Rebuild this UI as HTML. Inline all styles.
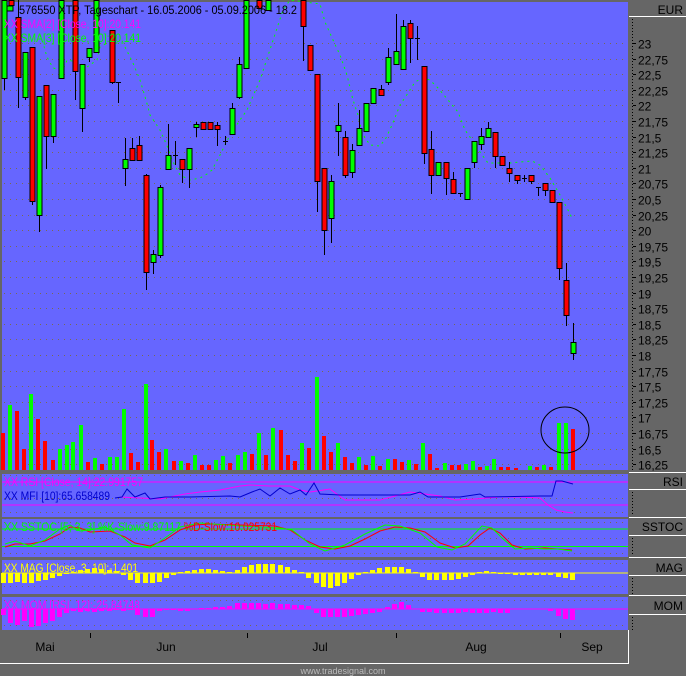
<!DOCTYPE html>
<html><head><meta charset="utf-8"><style>
html,body{margin:0;padding:0;background:#666666;width:686px;height:676px;overflow:hidden}
svg{display:block}
text{font-family:"Liberation Sans",Arial,sans-serif}
</style></head><body>
<svg id="s" width="686" height="676" viewBox="0 0 686 676" xmlns="http://www.w3.org/2000/svg">
<rect width="686" height="676" fill="#666666"/>
<rect x="2" y="2" width="626" height="468" fill="#6666ff"/>
<rect x="2" y="474" width="626" height="43" fill="#6666ff"/>
<rect x="2" y="519" width="626" height="38" fill="#6666ff"/>
<rect x="2" y="560" width="626" height="34" fill="#6666ff"/>
<rect x="2" y="597" width="626" height="33" fill="#6666ff"/>
<g id="grid"></g>
<g id="vol"></g>
<polyline id="sma" fill="none" stroke="#00ff00" stroke-width="1" stroke-dasharray="2,4"/>
<g id="candles"></g>
<ellipse cx="565" cy="430" rx="24" ry="23" fill="none" stroke="#000" stroke-width="1"/>
<rect x="7" y="6" width="6" height="5" fill="#00ff00" stroke="#000"/>
<text x="19" y="14" font-size="12" fill="#000" textLength="278" lengthAdjust="spacingAndGlyphs">576550 XTP, Tageschart - 16.05.2006 - 05.09.2006 - 18.2</text>
<text x="4" y="28" font-size="12" fill="#ff00ff" textLength="137" lengthAdjust="spacingAndGlyphs">XX SMA[2] [Close, 10]:20.141</text>
<text x="4" y="42" font-size="12" fill="#00ff00" textLength="137" lengthAdjust="spacingAndGlyphs">XX SMA[3] [Close, 10]:20.141</text>
<!-- right axis -->
<text x="683" y="14" font-size="12" fill="#000" text-anchor="end">EUR</text>
<line x1="629" y1="16.5" x2="686" y2="16.5" stroke="#fff"/>
<g id="yax"></g>
<!-- RSI -->
<line x1="2" y1="482" x2="628" y2="482" stroke="#ff00ff"/>
<line x1="2" y1="505" x2="628" y2="505" stroke="#ff00ff"/>
<polyline fill="none" stroke="#ff00ff" points="120,497 140,498 160,499 185,494 200,492 220,490 240,486 250,485 270,486 290,486 300,490 310,492 330,489 345,500 360,500 380,500 395,496 410,492 425,494 440,496 455,500 475,499 500,497 520,497 540,498 548,505 556,510 565,512 573,513"/>
<polyline fill="none" stroke="#0000cc" points="115,498 122,497 127,489 135,497 145,493 150,499 165,497 190,497 230,496 240,497 252,492 260,489 270,496 280,488 290,494 300,490 306,495 314,483 320,494 340,495 410,495 420,492 428,497 460,497 480,494 485,497 540,496 552,496 556,481 562,481 573,484"/>
<text x="4" y="486" font-size="12" fill="#ff00ff" textLength="139" lengthAdjust="spacingAndGlyphs">XX RSI [Close, 14]:22.991757</text>
<text x="4" y="500" font-size="12" fill="#0000cc" textLength="106" lengthAdjust="spacingAndGlyphs">XX MFI [10]:65.658489</text>
<!-- SSTOC -->
<line x1="2" y1="529" x2="628" y2="529" stroke="#00ff00"/>
<line x1="2" y1="546.5" x2="628" y2="546.5" stroke="#00ff00"/>
<polyline fill="none" stroke="#ff0000" points="5,547 15,544 30,544 45,541 60,534 70,527 80,528 90,532 110,531 125,537 135,543 150,546 165,540 180,530 195,525 210,524 240,525 275,526 290,530 305,540 320,547 335,549 350,546 365,539 380,531 395,527 410,528 425,532 440,543 455,548 468,546 480,535 490,528 500,533 512,545 525,549 545,548 558,549 572,550"/>
<polyline fill="none" stroke="#00ff00" points="5,544 15,541 30,546 45,540 60,529 70,525 80,531 90,530 105,527 120,535 132,545 150,548 165,538 180,527 200,523 240,526 280,528 292,530 310,544 325,551 345,545 365,534 385,525 400,526 420,533 437,547 452,550 465,544 482,526 492,528 502,538 515,549 530,548 545,549 558,549 572,551"/>
<text x="4" y="531" font-size="12" fill="#00ff00" textLength="177" lengthAdjust="spacingAndGlyphs">XX SSTOC [5, 3, 3] %K-Slow:9.87117</text>
<text x="184" y="531" font-size="12" fill="#ff0000" textLength="93" lengthAdjust="spacingAndGlyphs">%D-Slow:10.025731</text>
<!-- MAG -->
<g id="mag"></g>
<line x1="2" y1="573" x2="628" y2="573" stroke="#ffff00"/>
<text x="4" y="572" font-size="12" fill="#ffff00" textLength="134" lengthAdjust="spacingAndGlyphs">XX MAG [Close, 3, 10]:-1.401</text>
<!-- MOM -->
<g id="mom"></g>
<line x1="2" y1="609" x2="628" y2="609" stroke="#ff00ff"/>
<text x="4" y="609" font-size="12" fill="#ff00ff" textLength="136" lengthAdjust="spacingAndGlyphs">XX MOM [RSI, 12]:-25.84748</text>
<!-- right column panels -->
<g stroke="#fff">
<line x1="629" y1="472.5" x2="686" y2="472.5"/><line x1="629" y1="489.5" x2="686" y2="489.5"/>
<line x1="629" y1="517.5" x2="686" y2="517.5"/><line x1="629" y1="535.5" x2="686" y2="535.5"/>
<line x1="629" y1="557.5" x2="686" y2="557.5"/><line x1="629" y1="575.5" x2="686" y2="575.5"/>
<line x1="629" y1="595.5" x2="686" y2="595.5"/><line x1="629" y1="614.5" x2="686" y2="614.5"/>
<line x1="628.5" y1="630" x2="628.5" y2="664"/><line x1="0" y1="663.5" x2="629" y2="663.5"/>
</g>
<g stroke="#000" stroke-dasharray="1,2">
<line x1="632.5" y1="19" x2="632.5" y2="470"/>
<line x1="632.5" y1="492" x2="632.5" y2="516"/>
<line x1="632.5" y1="538" x2="632.5" y2="556"/>
<line x1="632.5" y1="578" x2="632.5" y2="594"/>
<line x1="632.5" y1="617" x2="632.5" y2="630"/>
</g>
<g font-size="12" fill="#000" text-anchor="end">
<text x="683" y="486">RSI</text><text x="683" y="531">SSTOC</text><text x="683" y="572">MAG</text><text x="683" y="610">MOM</text>
</g>
<!-- time axis -->
<g stroke="#000"><line x1="90.5" y1="633" x2="90.5" y2="638"/><line x1="247.5" y1="633" x2="247.5" y2="638"/><line x1="396.5" y1="633" x2="396.5" y2="638"/><line x1="560.5" y1="633" x2="560.5" y2="638"/></g>
<g font-size="12" fill="#000" text-anchor="middle">
<text x="45" y="651">Mai</text><text x="166" y="651">Jun</text><text x="320" y="651">Jul</text><text x="476" y="651">Aug</text><text x="592" y="651">Sep</text>
</g>
<text x="343" y="674" font-size="9" fill="#bbbbbb" text-anchor="middle">www.tradesignal.com</text>
</svg>
<script>
var NS="http://www.w3.org/2000/svg";
function el(p,t,a){var e=document.createElementNS(NS,t);for(var k in a)e.setAttribute(k,a[k]);document.getElementById(p).appendChild(e);return e;}
for(var i=0;i<=27;i++){var p=23-i*0.25;var y=Math.round(355-(p-18)*62.4)+0.5;
 el("grid","line",{x1:4,y1:y,x2:626,y2:y,stroke:"#7a6a50","stroke-dasharray":"1,5"});
 el("yax","line",{x1:633,y1:y,x2:636,y2:y,stroke:"#000"});
 var t=el("yax","text",{x:638,y:y+5,"font-size":12,fill:"#000"});t.textContent=String(p).replace(".",",");}
[[475],[498],[512],[522],[538],[553],[563],[586],[600],[625]].forEach(function(a){var y=a[0]+0.5;el("grid","line",{x1:4,y1:y,x2:626,y2:y,stroke:"#7a6a50","stroke-dasharray":"1,5"});});
var V=[[3,433,"r"],[10,405,"g"],[17,411,"r"],[24,449,"r"],[31,394,"g"],[38,419,"r"],[45,441,"r"],[53,460,"r"],[60,449,"g"],[67,445,"g"],[73,442,"g"],[81,425,"g"],[88,462,"r"],[95,458,"g"],[102,464,"r"],[110,457,"g"],[117,457,"g"],[124,409,"g"],[131,453,"r"],[138,462,"r"],[146,384,"g"],[152,440,"r"],[159,452,"r"],[166,449,"g"],[174,461,"r"],[181,461,"g"],[188,463,"r"],[195,455,"g"],[202,465,"r"],[209,465,"r"],[216,460,"g"],[223,456,"g"],[230,463,"r"],[238,455,"g"],[245,452,"g"],[252,454,"r"],[259,433,"g"],[266,455,"r"],[273,428,"g"],[281,430,"r"],[288,455,"r"],[295,461,"r"],[302,443,"g"],[309,448,"r"],[317,377,"g"],[324,436,"r"],[331,452,"r"],[338,443,"g"],[345,457,"r"],[352,463,"r"],[359,457,"g"],[366,465,"r"],[373,456,"g"],[380,466,"r"],[388,459,"g"],[395,459,"r"],[402,462,"r"],[409,460,"g"],[416,464,"r"],[423,443,"g"],[430,454,"r"],[437,468,"r"],[445,463,"g"],[452,465,"r"],[459,465,"r"],[466,464,"g"],[473,461,"g"],[480,467,"r"],[487,466,"g"],[494,459,"g"],[501,467,"r"],[508,467,"r"],[516,468,"r"],[530,466,"g"],[537,467,"r"],[544,465,"g"],[551,467,"r"],[559,423,"g"],[566,423,"g"],[573,429,"r"]];
V.forEach(function(v){el("vol","rect",{x:v[0]-2,y:v[1],width:4,height:470-v[1],fill:v[2]=="r"?"#ff0000":"#00ff00"});});
document.getElementById("sma").setAttribute("points","40,35 43,43 47,57 53,68 63,70 67,60 77,62 87,67 97,60 100,47 107,43 123,43 133,63 140,80 146,100 150,115 160,130 168,148 172,160 180,175 190,180 200,178 207,174 212,170 220,155 230,135 240,120 247,110 260,80 283,10 290,0 320,4 325,22 333,40 340,55 347,75 353,100 358,115 362,133 370,145 380,146 386,138 392,125 400,105 408,93 415,82 423,78 430,80 438,88 448,100 458,112 465,130 472,140 480,152 488,163 500,163 510,163 520,162 532,161 540,165 550,178 560,195 568,210 573,220");
var C=[[4,0,78,0,90,"g"],[11,0,5,0,5,"r"],[18,17,77,0,108,"r"],[25,52,97,52,100,"g"],[32,47,201,47,205,"r"],[39,96,215,96,232,"g"],[46,85,136,85,169,"r"],[53,94,136,94,143,"g"],[61,0,78,0,78,"g"],[75,0,71,0,100,"r"],[82,64,108,64,132,"g"],[89,48,57,48,62,"g"],[96,0,52,0,52,"g"],[112,30,82,30,84,"r"],[118,82,82,82,103,"k"],
[125,159,168,138,186,"g"],[132,148,160,138,160,"r"],[139,145,160,136,160,"r"],[146,175,272,174,290,"r"],[153,254,262,250,274,"g"],[160,187,255,185,258,"g"],[168,155,169,124,169,"g"],[175,155,155,141,165,"k"],[182,159,169,159,183,"r"],[189,148,169,148,188,"g"],[196,124,127,122,137,"g"],[203,122,129,122,129,"r"],[210,122,129,122,129,"r"],[217,125,129,122,146,"r"],[225,141,141,136,145,"k"],[232,108,134,103,134,"g"],[239,64,97,57,99,"g"],[246,0,68,0,68,"g"],[259,0,8,0,8,"r"],[268,0,10,0,10,"g"],
[303,0,26,0,61,"r"],[310,45,70,45,70,"r"],[317,74,181,74,212,"r"],[324,168,230,168,255,"r"],[331,181,218,175,243,"g"],[338,125,131,103,156,"g"],[345,137,175,131,178,"r"],[352,150,172,144,178,"g"],[359,128,145,110,145,"g"],[366,103,131,103,131,"g"],[373,88,103,88,103,"g"],[381,89,95,85,95,"r"],[388,57,82,48,85,"g"],[396,51,64,14,64,"g"],[403,26,69,20,69,"g"],[410,23,38,20,63,"r"],[417,38,38,26,60,"k"],
[424,66,153,66,164,"r"],[431,149,175,131,194,"r"],[438,162,175,162,175,"g"],[446,162,178,162,195,"r"],[453,179,193,172,193,"r"],[460,193,193,193,197,"k"],[467,168,199,168,199,"g"],[474,141,162,141,168,"g"],[481,136,144,128,150,"g"],[488,128,137,122,137,"g"],[495,132,156,132,168,"r"],[502,156,165,156,165,"r"],[509,168,173,162,182,"r"],[517,175,180,175,184,"r"],[524,178,178,175,182,"k"],[531,175,181,175,184,"r"],[538,187,187,187,196,"k"],[545,183,190,183,196,"r"],[552,190,202,190,202,"r"],[559,202,268,202,280,"r"],[566,280,315,263,326,"r"],[573,342,353,323,360,"g"]];
C.forEach(function(c){var x=c[0];
 el("candles","line",{x1:x+0.5,y1:c[3],x2:x+0.5,y2:c[4],stroke:"#000"});
 if(c[5]=="k"){el("candles","line",{x1:x-2,y1:c[1]+0.5,x2:x+3,y2:c[1]+0.5,stroke:"#000"});}
 else el("candles","rect",{x:x-2,y:c[1]+0.5,width:5,height:Math.max(c[2]-c[1],2),fill:c[5]=="r"?"#ff0000":"#00ff00",stroke:"#000"});});
function hist(id,base,col,segs){segs.forEach(function(s){var x=s[0];var v=s[1];
 el(id,"rect",{x:x-3,y:v<0?base:base-v,width:5,height:Math.abs(v),fill:col});});}
var mag=[[4,-10],[11,-10],[18,-9],[25,-10],[32,-10],[39,-8],[46,-7],[53,-5],[60,-3],[67,-1],[74,1],[81,3],[88,4],[95,5],[102,4],[110,3],[117,2],[124,-2],[131,-7],[138,-10],[146,-10],[153,-10],[160,-9],[167,-5],[174,-2],[181,1],[188,2],[195,3],[202,4],[209,4],[216,3],[223,2],[230,1],[238,3],[245,6],[252,8],[259,9],[266,9],[273,9],[281,8],[288,6],[295,3],[302,1],[309,-5],[317,-10],[324,-14],[331,-15],[338,-13],[345,-10],[352,-6],[359,-2],[366,1],[373,3],[380,5],[388,6],[395,6],[402,6],[409,4],[416,1],[423,-4],[430,-7],[437,-7],[445,-7],[452,-7],[459,-6],[466,-4],[473,-2],[480,1],[487,2],[494,1],[501,-1],[508,-1],[516,-2],[523,-2],[530,-2],[537,-2],[544,-2],[551,-2],[559,-4],[566,-5],[573,-7]];
hist("mag",573,"#ffff00",mag);
var mom=[[4,-6],[11,-14],[18,-16],[25,-12],[32,-18],[39,-17],[46,-14],[53,-12],[60,-8],[67,-4],[74,-2],[81,-3],[88,-2],[95,-3],[102,-2],[110,-2],[117,-1],[124,-2],[131,-1],[138,-6],[146,-8],[153,-8],[160,-2],[167,-1],[174,-1],[181,-2],[188,-2],[195,0],[202,1],[209,1],[216,2],[223,2],[230,3],[238,6],[245,6],[252,6],[259,6],[266,5],[273,6],[281,5],[288,5],[295,4],[302,4],[309,3],[317,-4],[324,-8],[331,-8],[338,-8],[345,-8],[352,-7],[359,-6],[366,-5],[373,-4],[380,-3],[388,2],[395,5],[402,7],[409,4],[416,0],[423,-3],[430,-3],[437,-4],[445,-4],[452,-4],[459,-4],[466,-3],[473,-4],[480,-4],[487,-4],[494,-3],[501,-4],[508,-4],[516,0],[523,0],[530,0],[537,0],[544,0],[551,-2],[559,-7],[566,-10],[573,-11]];
hist("mom",609,"#ff00ff",mom);
</script>
</body></html>
